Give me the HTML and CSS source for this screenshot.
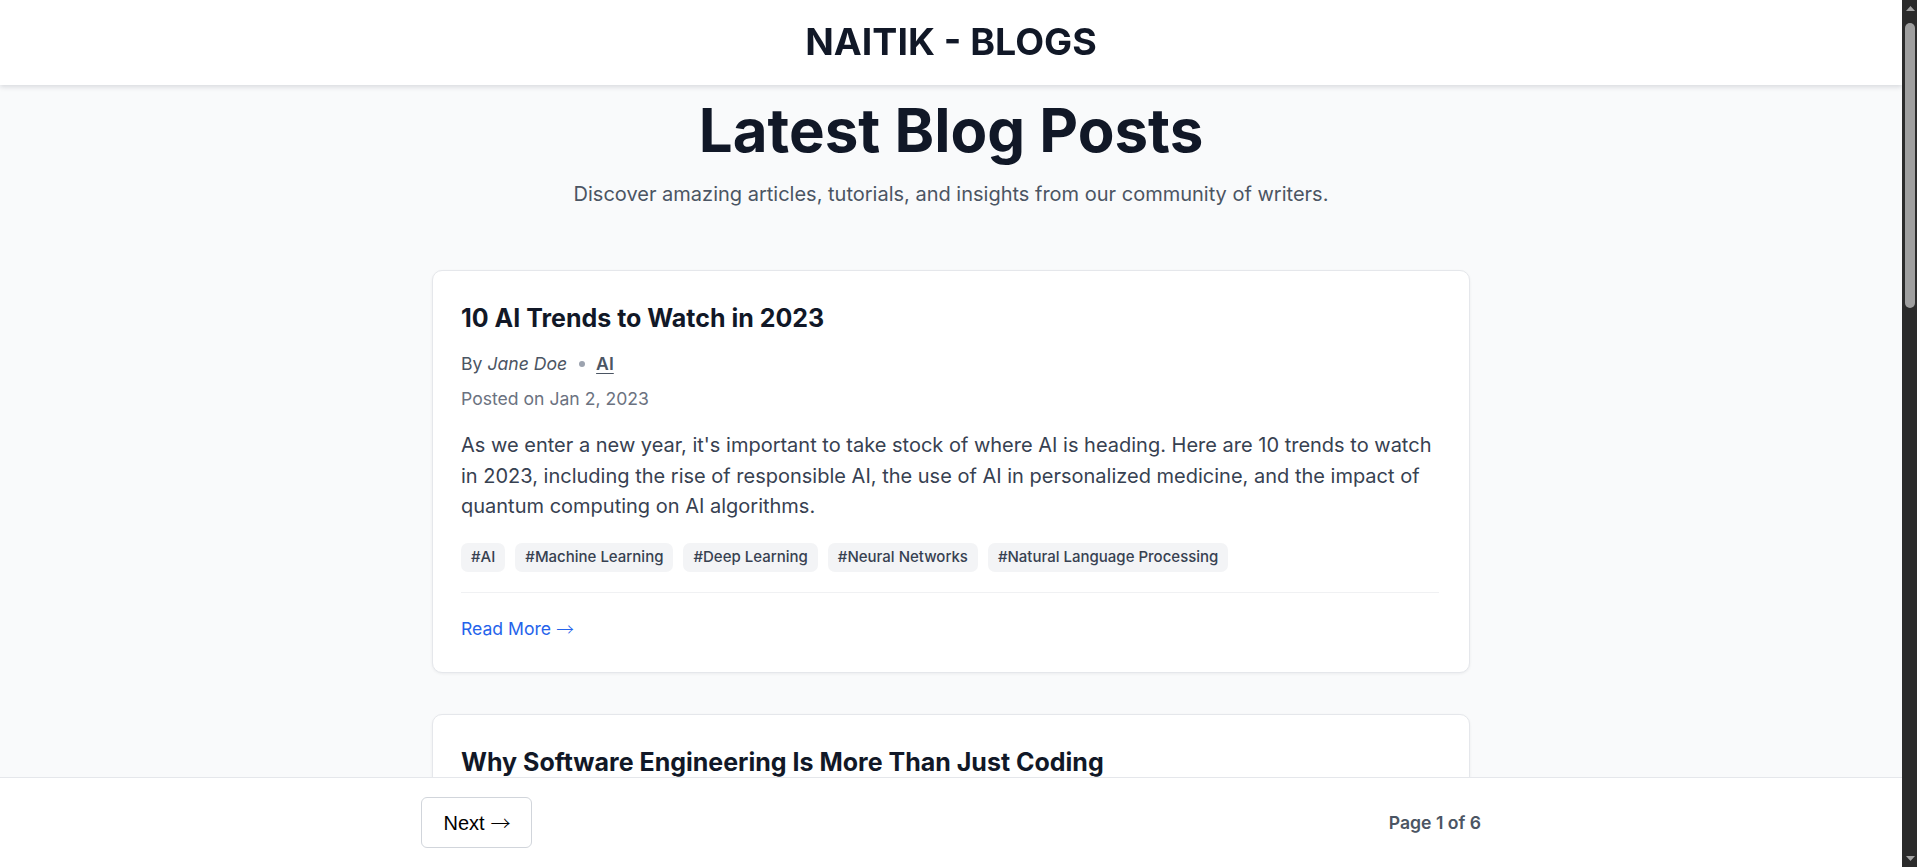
FILE: index.html
```html
<!DOCTYPE html>
<html lang="en">
<head>
<meta charset="utf-8">
<title>NAITIK - BLOGS</title>
<link rel="stylesheet" href="styles.css">
</head>
<body>
<div class="viewport">
<header class="site-header">
  <h1 class="brand">NAITIK - BLOGS</h1>
</header>

<main class="page">
  <section class="intro">
    <h2 class="intro-title">Latest Blog Posts</h2>
    <p class="intro-text">Discover amazing articles, tutorials, and insights from our community of writers.</p>
  </section>

  <div class="post-list">
    <article class="post">
      <h3 class="post-title">10 AI Trends to Watch in 2023</h3>
      <p class="post-meta">By <em class="author">Jane Doe</em><span class="dot"></span><a class="category" href="#">AI</a></p>
      <p class="post-date">Posted on Jan 2, 2023</p>
      <p class="post-excerpt">As we enter a new year, it's important to take stock of where AI is heading. Here are 10 trends to watch in 2023, including the rise of responsible AI, the use of AI in personalized medicine, and the impact of quantum computing on AI algorithms.</p>
      <ul class="tags">
        <li class="tag">#AI</li>
        <li class="tag">#Machine Learning</li>
        <li class="tag">#Deep Learning</li>
        <li class="tag">#Neural Networks</li>
        <li class="tag">#Natural Language Processing</li>
      </ul>
      <div class="post-footer"><a class="read-more" href="#"><span>Read More</span><span class="arrow">→</span></a></div>
    </article>

    <article class="post">
      <h3 class="post-title">Why Software Engineering Is More Than Just Coding</h3>
      <p class="post-meta">By <em class="author">John Smith</em><span class="dot"></span><a class="category" href="#">Software Engineering</a></p>
      <p class="post-date">Posted on Jan 5, 2023</p>
      <p class="post-excerpt">Writing code is only one part of building software. Great engineers also communicate clearly, design for change, review each other's work, and think carefully about the people who will use and maintain what they build.</p>
      <ul class="tags">
        <li class="tag">#Software Engineering</li>
        <li class="tag">#Career</li>
        <li class="tag">#Best Practices</li>
      </ul>
      <div class="post-footer"><a class="read-more" href="#"><span>Read More</span><span class="arrow">→</span></a></div>
    </article>

    <article class="post">
      <h3 class="post-title">A Beginner's Guide to React Hooks</h3>
      <p class="post-meta">By <em class="author">Emily Chen</em><span class="dot"></span><a class="category" href="#">Web Development</a></p>
      <p class="post-date">Posted on Jan 9, 2023</p>
      <p class="post-excerpt">Hooks changed the way we write React components. In this guide we walk through useState, useEffect, and useContext with practical examples, and show how custom hooks can keep your components small and easy to test.</p>
      <ul class="tags">
        <li class="tag">#React</li>
        <li class="tag">#JavaScript</li>
        <li class="tag">#Frontend</li>
      </ul>
      <div class="post-footer"><a class="read-more" href="#"><span>Read More</span><span class="arrow">→</span></a></div>
    </article>

    <article class="post">
      <h3 class="post-title">Getting Started with Docker and Containers</h3>
      <p class="post-meta">By <em class="author">Michael Brown</em><span class="dot"></span><a class="category" href="#">DevOps</a></p>
      <p class="post-date">Posted on Jan 14, 2023</p>
      <p class="post-excerpt">Containers make it easy to ship applications that run the same everywhere. Learn how images, containers, and volumes fit together, and how to write a Dockerfile for your next project.</p>
      <ul class="tags">
        <li class="tag">#Docker</li>
        <li class="tag">#DevOps</li>
        <li class="tag">#Containers</li>
      </ul>
      <div class="post-footer"><a class="read-more" href="#"><span>Read More</span><span class="arrow">→</span></a></div>
    </article>

    <article class="post">
      <h3 class="post-title">Understanding Big O Notation</h3>
      <p class="post-meta">By <em class="author">Sarah Lee</em><span class="dot"></span><a class="category" href="#">Algorithms</a></p>
      <p class="post-date">Posted on Jan 18, 2023</p>
      <p class="post-excerpt">Big O notation describes how the running time of an algorithm grows with its input. We explain the most common complexity classes with simple examples so you can reason about performance with confidence.</p>
      <ul class="tags">
        <li class="tag">#Algorithms</li>
        <li class="tag">#Computer Science</li>
      </ul>
      <div class="post-footer"><a class="read-more" href="#"><span>Read More</span><span class="arrow">→</span></a></div>
    </article>
  </div>
</main>
</div>

<div class="rail" aria-hidden="true">
  <div class="rail-btn">
    <svg width="9" height="5" viewBox="0 0 9 5"><polygon points="0,5 4.5,0 9,5" fill="#a3a3a3"/></svg>
  </div>
  <div class="rail-track"><div class="rail-thumb"></div></div>
  <div class="rail-btn">
    <svg width="9" height="5" viewBox="0 0 9 5"><polygon points="0,0 9,0 4.5,5" fill="#a3a3a3"/></svg>
  </div>
</div>

<footer class="pager">
  <div class="pager-inner">
    <button class="pager-btn" type="button"><span>Next</span><span class="arrow">→</span></button>
    <span class="pager-info">Page 1 of 6</span>
  </div>
</footer>
</body>
</html>
```
FILE: styles.css
```css
html,
body {
  height: 100%;
  overflow: hidden;
}

body {
  margin: 0;
  display: flex;
  background: #f9fafb;
  color: #111827;
  font-family: Inter, "Noto Sans", sans-serif;
}

.viewport {
  flex: 1;
  min-width: 0;
  height: 100vh;
  overflow-y: auto;
  scrollbar-width: none;
  background: #f9fafb;
}

/* scrollbar rail drawn beside the scrolling area */
.rail {
  width: 15px;
  flex: none;
  height: 100vh;
  background: #2b2b2b;
  display: flex;
  flex-direction: column;
}

.rail-btn {
  height: 17px;
  flex: none;
  display: flex;
  align-items: center;
  justify-content: center;
  padding-left: 1px;
}

.rail-track {
  flex: 1;
  padding-top: 6px;
}

.rail-thumb {
  width: 10px;
  height: 285px;
  margin-left: 3px;
  border-radius: 5px;
  background: #9f9f9f;
}

.site-header {
  position: sticky;
  top: 0;
  z-index: 10;
  height: 85px;
  box-sizing: border-box;
  display: flex;
  align-items: center;
  justify-content: center;
  background: #ffffff;
  box-shadow: 0 2px 5px rgba(17, 24, 39, 0.14);
}

.brand {
  margin: 0;
  font-size: 37.5px;
  line-height: 40px;
  font-weight: 700;
  color: #111827;
  padding-bottom: 2px;
}

.page {
  padding: 15px 0 140px;
}

.intro {
  text-align: center;
}

.intro-title {
  margin: 0;
  font-size: 60px;
  line-height: 60px;
  font-weight: 700;
  color: #111827;
}

.intro-text {
  margin: 20px 0 0;
  font-size: 20px;
  line-height: 28px;
  color: #4b5563;
}

.post-list {
  width: 1038px;
  margin: 62px auto 0;
  display: flex;
  flex-direction: column;
  gap: 41px;
}

.post {
  background: #ffffff;
  border: 1px solid #e5e7eb;
  border-radius: 10px;
  box-shadow: 0 1px 3px rgba(17, 24, 39, 0.06);
  padding: 31px 30px 31px 28px;
}

.post-title {
  margin: 0;
  font-size: 25px;
  line-height: 32px;
  font-weight: 700;
  color: #111827;
}

.post-meta {
  margin: 18px 0 0;
  font-size: 17.6px;
  line-height: 24px;
  color: #4b5563;
  display: flex;
  align-items: center;
}

.author {
  margin-left: 5px;
  font-style: italic;
}

.dot {
  width: 6px;
  height: 6px;
  border-radius: 50%;
  background: #9ca3af;
  margin: 0 11px 0 12px;
}

.category {
  color: #4b5563;
  font-weight: 600;
  text-decoration: underline;
  text-underline-offset: 3px;
}

.post-date {
  margin: 11px 0 0;
  font-size: 17.6px;
  line-height: 24px;
  color: #6b7280;
}

.post-excerpt {
  margin: 19px 0 0;
  font-size: 20px;
  line-height: 30.5px;
  color: #374151;
}

.tags {
  list-style: none;
  margin: 21px 0 0;
  padding: 0;
  display: flex;
  flex-wrap: wrap;
  gap: 10px;
}

.tag {
  background: #f3f4f6;
  color: #374151;
  font-size: 15px;
  line-height: 20px;
  font-weight: 500;
  padding: 4.7px 10px;
  border-radius: 7px;
}

.post-footer {
  margin-top: 20px;
  padding-top: 24px;
  border-top: 1px solid #f0f1f3;
  display: flex;
}

.read-more {
  display: flex;
  align-items: center;
  gap: 5px;
  height: 24px;
  font-size: 17.6px;
  line-height: 24px;
  color: #2563eb;
  text-decoration: none;
}

.arrow {
  font-family: "Noto Sans CJK SC", "Liberation Sans", sans-serif;
  font-weight: 300;
  line-height: 1;
}

.pager {
  position: fixed;
  left: 0;
  right: 15px;
  bottom: 0;
  height: 90px;
  box-sizing: border-box;
  background: #ffffff;
  border-top: 1px solid #e5e7eb;
  display: flex;
  align-items: center;
  justify-content: center;
  z-index: 10;
}

.pager-inner {
  width: 1060px;
  display: flex;
  align-items: center;
  justify-content: space-between;
}

.pager-btn {
  height: 51px;
  width: 111px;
  padding: 0 0 0 1px;
  display: flex;
  align-items: center;
  justify-content: center;
  gap: 6px;
  background: #ffffff;
  color: #000000;
  border: 1px solid #d1d5db;
  border-radius: 6px;
  font-family: "Liberation Sans", Arial, sans-serif;
  font-size: 20px;
  line-height: 24px;
}

.pager-info {
  font-size: 17.6px;
  font-weight: 600;
  color: #4b5563;
}
```
